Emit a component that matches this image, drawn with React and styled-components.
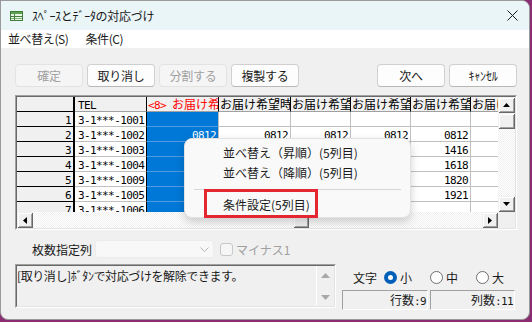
import React from 'react';
import styled, { createGlobalStyle } from 'styled-components';

const GlobalStyle = createGlobalStyle`
  html, body { margin: 0; padding: 0; }
  body {
    width: 532px;
    height: 322px;
    overflow: hidden;
    background: #8a2d72;
    font-family: "Noto Sans CJK JP", "Noto Sans", sans-serif;
    color: #1a1a1a;
  }
`;

const Window = styled.div`
  width: 530px;
  height: 320px;
  box-sizing: border-box;
  border: 1px solid #9a9a9a;
  border-radius: 0 8px 8px 8px;
  background: #f0f0f0;
  overflow: hidden;
  display: flex;
  flex-direction: column;
`;

const TitleBar = styled.div`
  height: 29px;
  flex-shrink: 0;
  background: #e9f5f7;
  display: flex;
  align-items: center;
  padding-left: 9px;
  font-size: 12px;
  line-height: 14px;
`;

const Title = styled.span`
  margin-left: 9px;
  flex: 1;
  letter-spacing: -0.3px;
`;

const CloseBtn = styled.div`
  width: 30px;
  height: 29px;
  display: flex;
  align-items: center;
  justify-content: center;
  margin-right: 2px;
`;

const MenuBar = styled.div`
  height: 18px;
  flex-shrink: 0;
  background: #ffffff;
  display: flex;
  align-items: center;
  padding-left: 7px;
  gap: 17px;
  font-size: 12px;
  line-height: 14px;
  letter-spacing: -0.4px;
`;

const Body = styled.div`
  flex: 1;
  padding: 16px 12px 0 14px;
  display: flex;
  flex-direction: column;
`;

const ButtonRow = styled.div`
  display: flex;
  gap: 4px;
  height: 23px;
`;

const Spacer = styled.div`
  flex: 1;
`;

const Button = styled.div`
  width: 68px;
  height: 23px;
  box-sizing: border-box;
  border: 1px solid ${p => (p.$disabled ? '#e3e3e3' : '#d0d0d0')};
  border-bottom-color: ${p => (p.$disabled ? '#e3e3e3' : '#b8b8b8')};
  border-radius: 4px;
  background: ${p => (p.$disabled ? '#f5f5f5' : '#fdfdfd')};
  color: ${p => (p.$disabled ? '#a0a0a0' : '#1a1a1a')};
  font-size: 12px;
  display: flex;
  align-items: center;
  justify-content: center;
  letter-spacing: -0.2px;
`;

/* ---- grid ---- */

const GridBox = styled.div`
  position: relative;
  margin-top: 8px;
  width: 502px;
  height: 135px;
  box-sizing: border-box;
  border-style: solid;
  border-width: 1px;
  border-color: #a0a0a0 #ffffff #ffffff #a0a0a0;
  background: #f0f0f0;
`;

const GridInner = styled.div`
  height: 100%;
  box-sizing: border-box;
  border-style: solid;
  border-width: 1px;
  border-color: #696969 #e3e3e3 #e3e3e3 #696969;
  display: grid;
  grid-template-columns: 1fr 17px;
  grid-template-rows: 1fr 16px;
`;

const Viewport = styled.div`
  overflow: hidden;
  background: #ffffff;
`;

const Row = styled.div`
  display: flex;
  height: 15px;
`;

const Cell = styled.div`
  flex-shrink: 0;
  width: ${p => p.$w}px;
  height: 100%;
  box-sizing: border-box;
  overflow: hidden;
  white-space: nowrap;
  border-right: ${p => p.$sepW || 1}px solid ${p => p.$sep || '#c0c0c0'};
  border-bottom: 1px solid ${p => p.$under || '#c0c0c0'};
  background: ${p => p.$bg || '#ffffff'};
  color: ${p => p.$color || '#000000'};
  text-align: ${p => p.$align || 'left'};
  padding: 0 ${p => (p.$align === 'right' ? 2 : 0)}px 0 ${p => (p.$align === 'right' ? 0 : p.$padL ?? 1)}px;
  font-size: 12px;
  line-height: 14px;
`;

const Mono = styled.span`
  font-family: "DejaVu Sans Mono", monospace;
  font-size: 11px;
  letter-spacing: -0.6px;
`;

const VScroll = styled.div`
  display: flex;
  flex-direction: column;
  background: repeating-conic-gradient(#f0f0f0 0 25%, #ffffff 0 50%) 0 0 / 2px 2px;
`;

const HScroll = styled.div`
  display: flex;
  background: repeating-conic-gradient(#f0f0f0 0 25%, #ffffff 0 50%) 0 0 / 2px 2px;
`;

const Corner = styled.div`
  background: #f0f0f0;
`;

const Raised = styled.div`
  flex-shrink: 0;
  width: ${p => p.$w}px;
  height: ${p => p.$h}px;
  box-sizing: border-box;
  background: #f0f0f0;
  box-shadow: inset 1px 1px #f0f0f0, inset -1px -1px #696969, inset 2px 2px #ffffff, inset -2px -2px #a0a0a0;
  display: flex;
  align-items: center;
  justify-content: center;
`;

const Track = styled.div`
  flex: 1;
  display: flex;
`;

/* ---- context menu ---- */

const ContextMenu = styled.div`
  position: absolute;
  left: 168px;
  top: 42px;
  width: 227px;
  box-sizing: border-box;
  padding: 4px 0 2px;
  background: #f9f9f9;
  border: 1px solid #e2e2e2;
  border-radius: 8px;
  box-shadow: 0 4px 10px rgba(0, 0, 0, 0.18);
  font-size: 12px;
  color: #1b1b1b;
`;

const MenuItem = styled.div`
  height: 20px;
  line-height: 20px;
  padding-left: 38px;
  white-space: nowrap;
`;

const MenuSep = styled.div`
  height: 1px;
  margin: 6px 9px 5px;
  background: #d6d6d6;
`;

const Highlight = styled.div`
  position: absolute;
  left: 19px;
  top: 50px;
  width: 114px;
  height: 29px;
  box-sizing: border-box;
  border: 3px solid #e3262f;
`;

/* ---- bottom form ---- */

const FormRow = styled.div`
  display: flex;
  align-items: center;
  height: 18px;
  margin-top: 10px;
  padding-left: 17px;
  font-size: 12px;
`;

const FieldLabel = styled.span`
  width: 63px;
`;

const Combo = styled.div`
  width: 119px;
  height: 18px;
  box-sizing: border-box;
  background: #f8f8f8;
  border: 1px solid #ececec;
  border-radius: 3px;
  display: flex;
  align-items: center;
  justify-content: flex-end;
  padding-right: 4px;
`;

const CheckBox = styled.div`
  width: 13px;
  height: 13px;
  box-sizing: border-box;
  border: 1px solid #c8c8c8;
  border-radius: 3px;
  margin-left: 6px;
  background: #f6f6f6;
`;

const CheckLabel = styled.span`
  margin-left: 3px;
  color: #a0a0a0;
`;

const Lower = styled.div`
  display: flex;
  margin-top: 6px;
  gap: 6px;
`;

const MessageBox = styled.div`
  width: 321px;
  height: 44px;
  box-sizing: border-box;
  border-style: solid;
  border-width: 1px;
  border-color: #a0a0a0 #ffffff #ffffff #a0a0a0;
`;

const MessageInner = styled.div`
  height: 100%;
  box-sizing: border-box;
  border-style: solid;
  border-width: 1px;
  border-color: #696969 #e3e3e3 #e3e3e3 #696969;
  display: flex;
`;

const MessageText = styled.div`
  flex: 1;
  font-size: 12px;
  line-height: 14px;
  padding-top: 3px;
  letter-spacing: -0.4px;
  white-space: nowrap;
`;

const MiniScroll = styled.div`
  width: 17px;
  border-left: 1px solid #ffffff;
  display: flex;
  flex-direction: column;
  justify-content: space-between;
  align-items: center;
  padding: 7px 0 6px;
`;

const SidePanel = styled.div`
  width: 173px;
  display: flex;
  flex-direction: column;
  padding-top: 6px;
  gap: 6px;
`;

const RadioRow = styled.div`
  display: flex;
  align-items: center;
  height: 14px;
  padding-left: 11px;
  font-size: 12px;
  white-space: nowrap;
`;

const RadioGroupLabel = styled.span`
  margin-right: 7px;
  flex-shrink: 0;
`;

const RadioOption = styled.label`
  display: flex;
  align-items: center;
  gap: 3px;
  flex-shrink: 0;
  &:not(:last-child) {
    margin-right: 18px;
  }
`;

const RadioDot = styled.span`
  width: 13px;
  height: 13px;
  box-sizing: border-box;
  border-radius: 50%;
  display: flex;
  align-items: center;
  justify-content: center;
  background: ${p => (p.$on ? '#005fb8' : '#ffffff')};
  border: ${p => (p.$on ? 'none' : '1px solid #6e6e6e')};
  &::after {
    content: '';
    width: 5px;
    height: 5px;
    border-radius: 50%;
    background: ${p => (p.$on ? '#ffffff' : 'transparent')};
  }
`;

const StatusRow = styled.div`
  display: flex;
  gap: 2px;
`;

const StatusPane = styled.div`
  width: ${p => p.$w}px;
  height: 20px;
  box-sizing: border-box;
  border-style: solid;
  border-width: 1px;
  border-color: #a0a0a0 #ffffff #ffffff #a0a0a0;
  text-align: right;
  padding-right: 1px;
  font-size: 12px;
  line-height: 18px;
`;

const Tri = ({ dir, color = '#000000', size = 7 }) => {
  const s = size;
  const h = Math.ceil(s / 2);
  const vertical = dir === 'up' || dir === 'down';
  const w = vertical ? s : h;
  const hh = vertical ? h : s;
  const pts = {
    up: `0,${h} ${s / 2},0 ${s},${h}`,
    down: `0,0 ${s},0 ${s / 2},${h}`,
    left: `${h},0 ${h},${s} 0,${s / 2}`,
    right: `0,0 0,${s} ${h},${s / 2}`,
  }[dir];
  return (
    <svg width={w} height={hh} viewBox={`0 0 ${w} ${hh}`}>
      <polygon points={pts} fill={color} />
    </svg>
  );
};

const GridIcon = () => (
  <svg width="13" height="10" viewBox="0 0 13 10">
    <rect x="0.5" y="0.5" width="12" height="9" fill="#e8f4e4" stroke="#3f7f3a" />
    <rect x="1" y="1" width="11" height="2" fill="#5aa04f" />
    <line x1="1" y1="5.5" x2="12" y2="5.5" stroke="#3f7f3a" />
    <line x1="1" y1="7.5" x2="12" y2="7.5" stroke="#7fb676" />
    <line x1="4.5" y1="3" x2="4.5" y2="9" stroke="#3f7f3a" />
  </svg>
);

const widths = [58, 72, 72, 72, 60, 60, 60, 60];
const headers = ['', 'TEL', 'sel', 'お届け希望時間帯', 'お届け希望日', 'お届け希望時間', 'お届け希望時間', 'お届け希望日'];
const tels = ['1001', '1002', '1003', '1004', '1009', '1005', '1006'];
const col7 = ['', '0812', '1416', '1618', '1820', '1921', ''];

const rows = tels.map((t, i) => [
  String(i + 1),
  `3-1***-${t}`,
  i === 1 ? '0812' : '',
  i === 1 ? '0812' : '',
  i === 1 ? '0812' : '',
  i === 1 ? '0812' : '',
  col7[i],
  '',
]);

const HeaderRow = () => (
  <Row>
    {widths.map((w, c) => (
      <Cell
        key={c}
        $w={w}
        $bg="#f0f0f0"
        $sep="#000000"
        $sepW={c === 0 ? 2 : 1}
        $under={c === 0 ? '#000000' : '#a0a0a0'}
        $color={c === 2 ? '#ff0000' : '#000000'}
        $padL={c === 1 ? 3 : 1}
      >
        {c === 1 && <Mono>TEL</Mono>}
        {c === 2 && (
          <>
            <Mono>&lt;8&gt; </Mono>お届け希
          </>
        )}
        {c > 2 && headers[c]}
      </Cell>
    ))}
  </Row>
);

const DataRow = ({ values }) => (
  <Row>
    {widths.map((w, c) => {
      const rowHead = c === 0;
      return (
        <Cell
          key={c}
          $w={w}
          $bg={rowHead ? '#f0f0f0' : c === 2 ? '#0078d7' : '#ffffff'}
          $color={c === 2 ? '#ffffff' : '#000000'}
          $sep={c <= 1 ? '#000000' : '#c0c0c0'}
          $sepW={rowHead ? 2 : 1}
          $under={rowHead ? '#000000' : c === 2 ? '#4d9be0' : '#c0c0c0'}
          $align={c === 1 ? 'left' : 'right'}
          $padL={3}
        >
          <Mono>{values[c]}</Mono>
        </Cell>
      );
    })}
  </Row>
);

export default function App() {
  return (
    <>
      <GlobalStyle />
      <Window>
        <TitleBar>
          <GridIcon />
          <Title>ｽﾍﾟｰｽとﾃﾞｰﾀの対応づけ</Title>
          <CloseBtn>
            <svg width="11" height="11" viewBox="0 0 11 11">
              <path d="M0.5 0.5 L10.5 10.5 M10.5 0.5 L0.5 10.5" stroke="#1a1a1a" strokeWidth="1" />
            </svg>
          </CloseBtn>
        </TitleBar>
        <MenuBar>
          <span>並べ替え(S)</span>
          <span>条件(C)</span>
        </MenuBar>
        <Body>
          <ButtonRow>
            <Button $disabled>確定</Button>
            <Button>取り消し</Button>
            <Button $disabled>分割する</Button>
            <Button>複製する</Button>
            <Spacer />
            <Button>次へ</Button>
            <Button>ｷｬﾝｾﾙ</Button>
          </ButtonRow>

          <GridBox>
            <GridInner>
              <Viewport>
                <HeaderRow />
                {rows.map((r, i) => (
                  <DataRow key={i} values={r} />
                ))}
              </Viewport>
              <VScroll>
                <Raised $w={17} $h={16}><Tri dir="up" /></Raised>
                <Raised $w={17} $h={16} />
                <Track />
                <Raised $w={17} $h={16}><Tri dir="down" /></Raised>
              </VScroll>
              <HScroll>
                <Raised $w={16} $h={16}><Tri dir="left" /></Raised>
                <Track>
                  <Raised $w={16} $h={16} style={{ marginLeft: 260 }} />
                </Track>
                <Raised $w={16} $h={16}><Tri dir="right" /></Raised>
              </HScroll>
              <Corner />
            </GridInner>

            <ContextMenu>
              <MenuItem>並べ替え（昇順）(5列目)</MenuItem>
              <MenuItem>並べ替え（降順）(5列目)</MenuItem>
              <MenuSep />
              <MenuItem>条件設定(5列目)</MenuItem>
              <Highlight />
            </ContextMenu>
          </GridBox>

          <FormRow>
            <FieldLabel>枚数指定列</FieldLabel>
            <Combo>
              <svg width="9" height="5" viewBox="0 0 9 5">
                <path d="M0.5 0.5 L4.5 4.5 L8.5 0.5" fill="none" stroke="#b5b5b5" />
              </svg>
            </Combo>
            <CheckBox />
            <CheckLabel>マイナス1</CheckLabel>
          </FormRow>

          <Lower>
            <MessageBox>
              <MessageInner>
                <MessageText>[取り消し]ﾎﾞﾀﾝで対応づけを解除できます。</MessageText>
                <MiniScroll>
                  <Tri dir="up" color="#a8a8a8" size={9} />
                  <Tri dir="down" color="#a8a8a8" size={9} />
                </MiniScroll>
              </MessageInner>
            </MessageBox>
            <SidePanel>
              <RadioRow>
                <RadioGroupLabel>文字</RadioGroupLabel>
                <RadioOption><RadioDot $on />小</RadioOption>
                <RadioOption><RadioDot />中</RadioOption>
                <RadioOption><RadioDot />大</RadioOption>
              </RadioRow>
              <StatusRow>
                <StatusPane $w={86}>行数<Mono>:9</Mono></StatusPane>
                <StatusPane $w={85}>列数<Mono>:11</Mono></StatusPane>
              </StatusRow>
            </SidePanel>
          </Lower>
        </Body>
      </Window>
    </>
  );
}
